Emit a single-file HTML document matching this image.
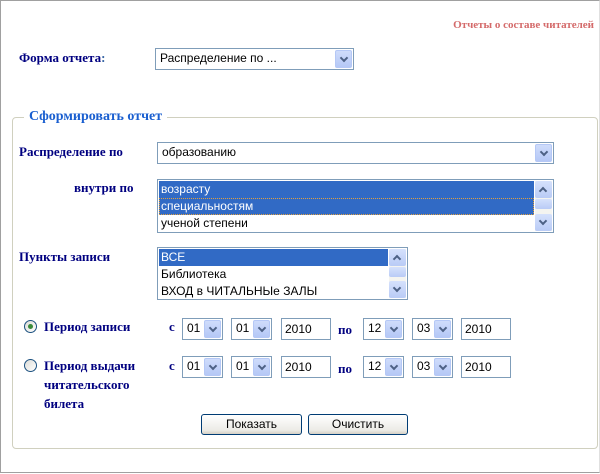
<!DOCTYPE html><html><head><meta charset="utf-8"><style>
*{box-sizing:border-box;margin:0;padding:0}
body{width:600px;height:474px;background:#fff;position:relative;overflow:hidden;font-family:"Liberation Sans",sans-serif}
.frame{position:absolute;left:0;top:0;width:600px;height:473px;border:1px solid #a0a0a0;border-right-color:#e0e0e0}
.a{position:absolute}
.lb{font-family:"Liberation Serif",serif;font-weight:bold;font-size:13px;color:#000080;line-height:19px}
.sel{position:absolute;border:1px solid #7f9db9;background:#fff;font-size:12px;color:#000;padding:2px 0 0 4px;height:22px}
.sel .b{position:absolute;right:1px;top:1px;bottom:1px;width:17px;background:linear-gradient(#cfdcfb,#b5c8f6);border:1px solid #b5c8f6;border-radius:2px}
.sel .b:after,.sb .u:after,.sb .d:after{content:"";position:absolute;left:5px;top:4px;width:4px;height:4px;border-right:2px solid #4d6185;border-bottom:2px solid #4d6185;transform:rotate(45deg)}
.lst{position:absolute;border:1px solid #7f9db9;background:#fff;font-size:12px;padding:1px}
.lst .i{height:17px;line-height:17px;padding-left:2px;margin-right:18px}
.lst .s{background:#316ac5;color:#fff}
.sb{position:absolute;right:1px;top:1px;bottom:1px;width:17px;background:#f4f4f0}
.sb .u,.sb .d{position:absolute;left:0;width:17px;height:17px;background:linear-gradient(#d5e1fc,#b9cbf6);border-radius:2px}
.sb .u{top:0}.sb .d{bottom:0}
.sb .u:after{top:7px;transform:rotate(-135deg)}
.sb .t{position:absolute;left:0;top:18px;width:17px;height:10px;background:linear-gradient(#d5e1fc,#b9cbf6);border-radius:2px}
.tx{position:absolute;border:1px solid #7f9db9;background:#fff;font-size:12px;padding:3px 0 0 3px;height:22px;width:50px}
.btn{position:absolute;border:1px solid #003c74;border-radius:3px;background:linear-gradient(#fff,#ecebe6 80%,#d6d0c5);font-size:12px;text-align:center;line-height:19px;height:21px}
.rad{position:absolute;width:13px;height:13px;border-radius:50%;border:1px solid #1c5180;background:linear-gradient(135deg,#dcdcd7,#fff)}
</style></head><body>
<div class="frame"></div>
<div class="a" style="right:6px;top:19px;font-family:'Liberation Serif',serif;font-weight:bold;font-size:11px;color:#d46a6a">Отчеты о составе читателей</div>
<div class="a lb" style="left:19px;top:48px">Форма отчета<span style="color:#3060a0">:</span></div>
<div class="sel" style="left:155px;top:48px;width:199px">Распределение по ...<div class="b"></div></div>
<div class="a" style="left:12px;top:117px;width:586px;height:332px;border:1px solid #d0d0bf;border-radius:4px"></div>
<div class="a" style="left:24px;top:107px;background:#fff;padding:0 5px;font-family:'Liberation Serif',serif;font-weight:bold;font-size:14px;color:#1a5fd0;line-height:20px">Сформировать отчет</div>
<div class="a lb" style="left:19px;top:142px">Распределение по</div>
<div class="sel" style="left:157px;top:142px;width:397px">образованию<div class="b"></div></div>
<div class="a lb" style="left:74px;top:178px">внутри по</div>
<div class="lst" style="left:157px;top:179px;width:397px;height:54px"><div class="i s">возрасту</div><div class="i s" style="outline:1px dotted #e0a040;outline-offset:-1px">специальностям</div><div class="i">ученой степени</div><div class="sb"><div class="u"></div><div class="t"></div><div class="d"></div></div></div>
<div class="a lb" style="left:19px;top:247px">Пункты записи</div>
<div class="lst" style="left:157px;top:247px;width:251px;height:53px"><div class="i s">ВСЕ</div><div class="i">Библиотека</div><div class="i">ВХОД в ЧИТАЛЬНЫе ЗАЛЫ</div><div class="sb"><div class="u"></div><div class="t"></div><div class="d"></div></div></div>
<div class="rad" style="left:24px;top:320px"><div style="position:absolute;left:3px;top:3px;width:5px;height:5px;border-radius:50%;background:#3a8a3a"></div></div>
<div class="a lb" style="left:44px;top:317px">Период записи</div>
<div class="rad" style="left:24px;top:359px"></div>
<div class="a lb" style="left:44px;top:356px">Период выдачи<br>читательского<br>билета</div>
<div class="a lb" style="left:169px;top:317px">с</div><div class="a lb" style="left:338px;top:320px">по</div>
<div class="a lb" style="left:169px;top:356px">с</div><div class="a lb" style="left:338px;top:359px">по</div>
<div class="sel" style="left:182px;top:318px;width:41px">01<div class="b"></div></div>
<div class="sel" style="left:231px;top:318px;width:41px">01<div class="b"></div></div>
<div class="tx" style="left:281px;top:318px">2010</div>
<div class="sel" style="left:363px;top:318px;width:41px">12<div class="b"></div></div>
<div class="sel" style="left:412px;top:318px;width:41px">03<div class="b"></div></div>
<div class="tx" style="left:461px;top:318px">2010</div>
<div class="sel" style="left:182px;top:356px;width:41px">01<div class="b"></div></div>
<div class="sel" style="left:231px;top:356px;width:41px">01<div class="b"></div></div>
<div class="tx" style="left:281px;top:356px">2010</div>
<div class="sel" style="left:363px;top:356px;width:41px">12<div class="b"></div></div>
<div class="sel" style="left:412px;top:356px;width:41px">03<div class="b"></div></div>
<div class="tx" style="left:461px;top:356px">2010</div>
<div class="btn" style="left:201px;top:414px;width:101px">Показать</div>
<div class="btn" style="left:308px;top:414px;width:100px">Очистить</div>
</body></html>
